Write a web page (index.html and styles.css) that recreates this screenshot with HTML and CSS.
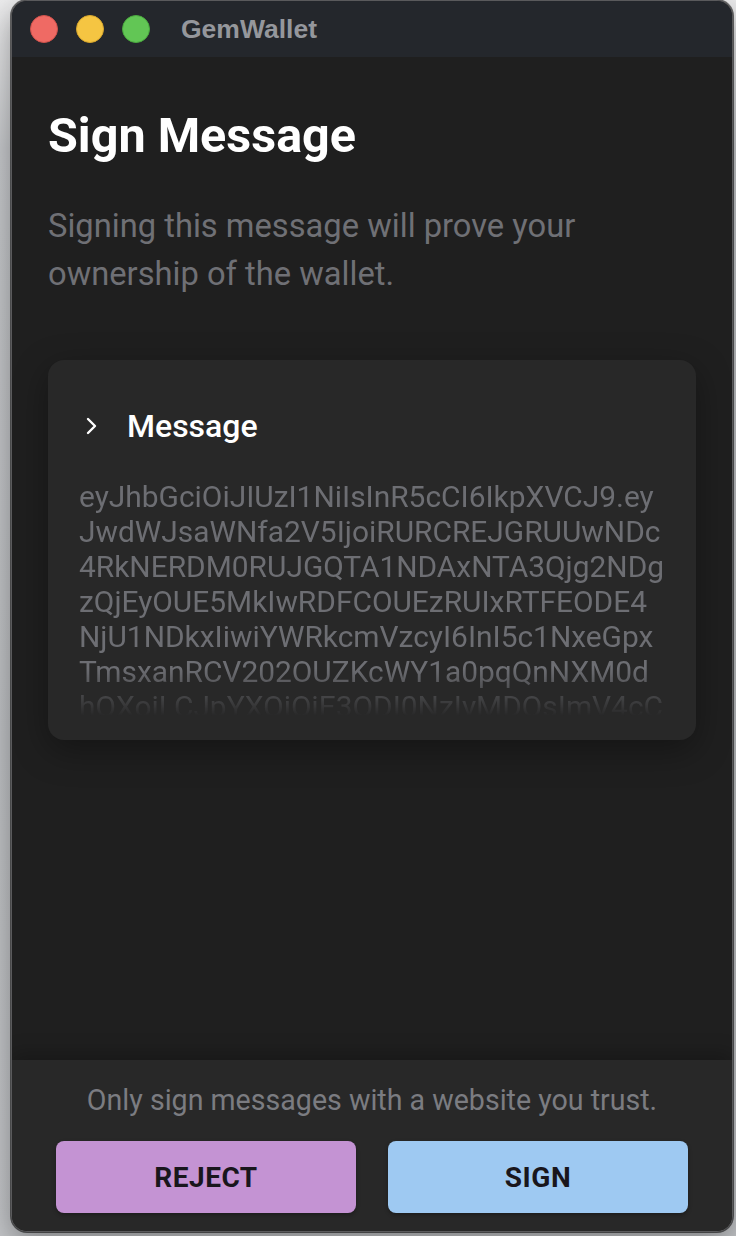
FILE: index.html
```html
<!DOCTYPE html>
<html lang="en">
<head>
    <meta charset="UTF-8">
    <meta name="viewport" content="width=device-width, initial-scale=1.0">
    <title>GemWallet</title>
    <link rel="stylesheet" href="styles.css">
</head>
<body>
    <div class="window">
        <div class="titlebar">
            <div class="lights">
                <span class="light red"></span>
                <span class="light yellow"></span>
                <span class="light green"></span>
            </div>
            <div class="window-title">GemWallet</div>
        </div>

        <main class="content">
            <h1>Sign Message</h1>
            <p class="intro">Signing this message will prove your ownership of the wallet.</p>

            <section class="card">
                <div class="card-head">
                    <svg class="chevron" viewBox="0 0 16 20" width="16" height="20">
                        <path d="M4 3 L11 10 L4 17" fill="none" stroke="#fff" stroke-width="2.4" stroke-linecap="round" stroke-linejoin="round"/>
                    </svg>
                    <span class="card-title">Message</span>
                </div>
                <!-- token split into fixed rows so the wrap stays stable -->
                <div class="message">
                    <span>eyJhbGciOiJIUzI1NiIsInR5cCI6IkpXVCJ9.ey</span>
                    <span>JwdWJsaWNfa2V5IjoiRURCREJGRUUwNDc</span>
                    <span>4RkNERDM0RUJGQTA1NDAxNTA3Qjg2NDg</span>
                    <span>zQjEyOUE5MkIwRDFCOUEzRUIxRTFEODE4</span>
                    <span>NjU1NDkxIiwiYWRkcmVzcyI6InI5c1NxeGpx</span>
                    <span>TmsxanRCV202OUZKcWY1a0pqQnNXM0d</span>
                    <span>hQXoiLCJpYXQiOjE3ODI0NzIyMDQsImV4cC</span>
                </div>
            </section>
        </main>

        <footer class="actions">
            <p class="warning">Only sign messages with a website you trust.</p>
            <div class="buttons">
                <button class="btn reject">REJECT</button>
                <button class="btn sign">SIGN</button>
            </div>
        </footer>
    </div>
</body>
</html>
```

FILE: styles.css
```css
html, body {
    height: 100%;
}
body {
    margin: 0;
    background: linear-gradient(#ececed, #c6c8cb 12%, #bec0c3 60%, #c3c5c8);
    font-family: Roboto, "Noto Sans", sans-serif;
    overflow: hidden;
}
.window {
    box-sizing: border-box;
    width: 722px;
    height: 1232px;
    margin: 0 3px 0 11px;
    display: flex;
    flex-direction: column;
    background-color: #1f1f1f;
    border: 1px solid #5a5a5c;
    border-radius: 16px;
    box-shadow: 0 0 0 1px rgba(0,0,0,0.55), 0 10px 30px rgba(0,0,0,0.35);
    overflow: hidden;
}

/* title bar */
.titlebar {
    height: 56px;
    flex-shrink: 0;
    display: flex;
    align-items: center;
    background-color: #24272c;
    padding-left: 18px;
}
.lights {
    display: flex;
    gap: 18px;
}
.light {
    width: 28px;
    height: 28px;
    border-radius: 50%;
    box-sizing: border-box;
}
.red {
    background-color: #ef6a64;
    border: 1px solid #d0524c;
}
.yellow {
    background-color: #f5c542;
    border: 1px solid #d8a72d;
}
.green {
    background-color: #62c655;
    border: 1px solid #4aa93e;
}
.window-title {
    margin-left: 31px;
    font-family: "Liberation Sans", Arial, sans-serif;
    font-weight: bold;
    font-size: 26.5px;
    color: #95979c;
}

/* main */
.content {
    flex: 1;
    padding: 0 36px;
}
h1 {
    margin: 51px 0 0;
    font-size: 48.5px;
    line-height: 56px;
    font-weight: 700;
    color: #fff;
}
.intro {
    margin: 38px 0 0;
    font-size: 32.7px;
    line-height: 48px;
    color: #6f7075;
}
.card {
    margin-top: 62px;
    padding: 46px 32px 24px 31px;
    background-color: #282828;
    border-radius: 16px;
    box-shadow: 0 10px 34px rgba(0,0,0,0.35);
}
.card-head {
    display: flex;
    align-items: center;
    height: 40px;
}
.chevron {
    margin-left: 5px;
}
.card-title {
    margin-left: 27px;
    font-size: 32px;
    font-weight: 500;
    color: #fff;
}
.message {
    margin-top: 33px;
    height: 237px;
    overflow: hidden;
    font-size: 29.9px;
    line-height: 35px;
    color: #6d6e73;
    -webkit-mask-image: linear-gradient(#000 80%, transparent 100%);
    mask-image: linear-gradient(#000 80%, transparent 100%);
}
.message span {
    display: block;
    white-space: nowrap;
}

/* footer */
.actions {
    flex-shrink: 0;
    padding: 24px 44px 18px;
    background-color: #282828;
    box-shadow: 0 -6px 18px rgba(0,0,0,0.25);
}
.warning {
    margin: 0;
    text-align: center;
    font-size: 28.6px;
    line-height: 32px;
    color: #7b7c81;
}
.buttons {
    display: flex;
    gap: 32px;
    margin-top: 25px;
}
.btn {
    flex: 1;
    height: 72px;
    border: none;
    border-radius: 8px;
    font-family: Roboto, sans-serif;
    font-size: 28px;
    font-weight: 700;
    letter-spacing: 0.5px;
    color: #19161c;
    box-shadow: 0 2px 4px rgba(0,0,0,0.3);
}
.reject {
    background-color: #c493d3;
}
.sign {
    background-color: #9ec9f2;
}
```
